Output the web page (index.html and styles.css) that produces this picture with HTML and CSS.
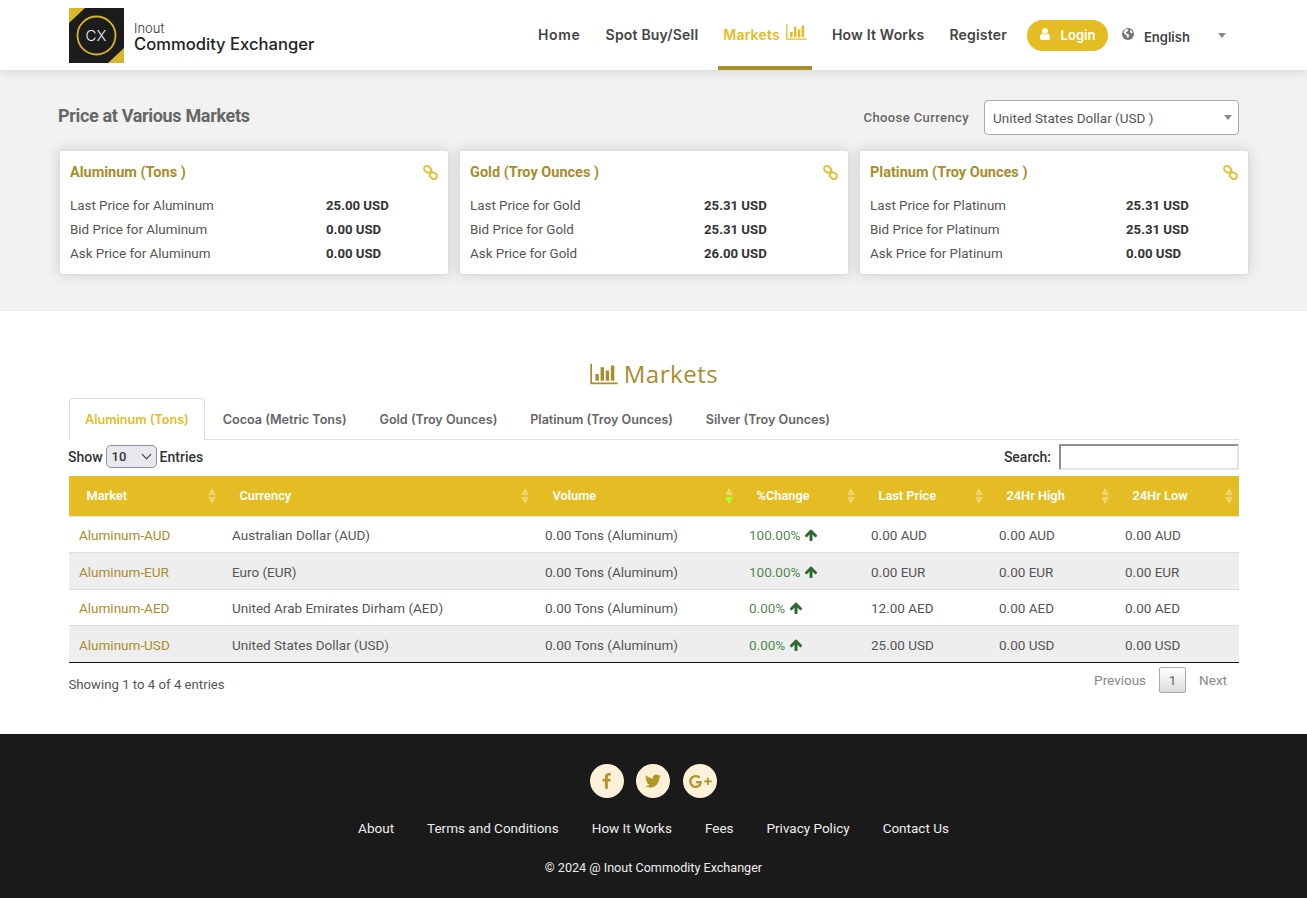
FILE: index.html
```html
<!DOCTYPE html>
<html lang="en">
<head>
<meta charset="utf-8">
<title>Inout Commodity Exchanger</title>
<link rel="stylesheet" href="styles.css">
</head>
<body>
<svg class="defs" width="0" height="0" aria-hidden="true">
  <symbol id="i-bars" viewBox="0 0 2048 1792"><path d="M640 896v512h-256v-512h256zm384-512v1024h-256v-1024h256zm1024 1152v128h-2048v-1536h128v1408h1920zm-640-896v768h-256v-768h256zm384-384v1152h-256v-1152h256z"/></symbol>
  <symbol id="i-up" viewBox="0 0 1792 1792"><path d="M1675 971q0 51-37 90l-75 75q-38 38-91 38-54 0-90-38l-294-293v704q0 52-37.5 84.5t-90.5 32.5h-128q-53 0-90.5-32.5t-37.5-84.5v-704l-294 293q-36 38-90 38t-90-38l-75-75q-38-38-38-90 0-53 38-91l651-651q35-37 90-37 54 0 91 37l651 651q37 39 37 91z"/></symbol>
  <symbol id="i-link" viewBox="0 0 16 16"><g fill="none" stroke="currentColor" stroke-width="1.9"><rect x="1" y="1.6" width="8" height="6" rx="3" transform="rotate(38 5 4.6)"/><rect x="7" y="8.4" width="8" height="6" rx="3" transform="rotate(38 11 11.4)"/></g></symbol>
</svg>

<header class="topbar">
  <a class="logo" href="#">
    <svg class="logo-mark" viewBox="0 0 55 55" aria-hidden="true">
      <rect width="55" height="55" fill="#1c1c1c"/>
      <path d="M0 0h16L0 15z" fill="#d9b52a"/>
      <path d="M55 55H39L55 40z" fill="#d9b52a"/>
      <circle cx="27.5" cy="27.5" r="19" fill="none" stroke="#d9b52a" stroke-width="1.8"/>
    </svg>
    <span class="logo-cx">CX</span>
    <span class="logo-text"><span class="logo-small">Inout</span><span class="logo-big">Commodity Exchanger</span></span>
  </a>
  <nav class="nav">
    <a class="nav-item nav-home" href="#">Home</a>
    <a class="nav-item" href="#">Spot Buy/Sell</a>
    <a class="nav-item active" href="#">Markets <svg class="nav-bars"><use href="#i-bars"/></svg></a>
    <a class="nav-item" href="#">How It Works</a>
    <a class="nav-item" href="#">Register</a>
    <a class="login" href="#"><svg class="login-icon" viewBox="0 0 1792 1792"><path d="M1536 1399q0 109-62.5 187t-150.5 78h-854q-88 0-150.5-78t-62.5-187q0-85 8.5-160.5t31.5-152 58.5-131 94-89 134.5-34.5q131 128 313 128t313-128q76 0 134.5 34.5t94 89 58.5 131 31.5 152 8.5 160.5zm-256-887q0 159-112.5 271.5t-271.5 112.5-271.5-112.5-112.5-271.5 112.5-271.5 271.5-112.5 271.5 112.5 112.5 271.5z"/></svg>Login</a>
    <div class="lang">
      <svg class="globe" viewBox="0 0 12 12"><circle cx="6" cy="6" r="6"/><path d="M3 1.6l2.4-.6 1 1-1 1.4-1.6.6.4 1.4 2 .6 1 1.4-.8 2.2-1.2-.2-.6-2.2-1.8-1-1.2-2zM8 2l2 1 .6 2-1.4.2L8 4z" fill="#fff"/></svg>
      <span class="lang-name">English</span>
      <span class="caret"></span>
    </div>
  </nav>
</header>

<section class="prices">
  <div class="prices-head">
    <h2 class="prices-title">Price at Various Markets</h2>
    <div class="currency">
      <label class="currency-label">Choose Currency</label>
      <div class="currency-box">United States Dollar (USD )<span class="currency-caret"></span></div>
    </div>
  </div>
  <div class="cards">
    <article class="card wide">
      <div class="card-head"><h3 class="card-title">Aluminum (Tons )</h3><svg class="card-link"><use href="#i-link"/></svg></div>
      <div class="card-row"><span>Last Price for Aluminum</span><b>25.00 USD</b></div>
      <div class="card-row"><span>Bid Price for Aluminum</span><b>0.00 USD</b></div>
      <div class="card-row"><span>Ask Price for Aluminum</span><b>0.00 USD</b></div>
    </article>
    <article class="card narrow">
      <div class="card-head"><h3 class="card-title">Gold (Troy Ounces )</h3><svg class="card-link"><use href="#i-link"/></svg></div>
      <div class="card-row"><span>Last Price for Gold</span><b>25.31 USD</b></div>
      <div class="card-row"><span>Bid Price for Gold</span><b>25.31 USD</b></div>
      <div class="card-row"><span>Ask Price for Gold</span><b>26.00 USD</b></div>
    </article>
    <article class="card wide">
      <div class="card-head"><h3 class="card-title">Platinum (Troy Ounces )</h3><svg class="card-link"><use href="#i-link"/></svg></div>
      <div class="card-row"><span>Last Price for Platinum</span><b>25.31 USD</b></div>
      <div class="card-row"><span>Bid Price for Platinum</span><b>25.31 USD</b></div>
      <div class="card-row"><span>Ask Price for Platinum</span><b>0.00 USD</b></div>
    </article>
  </div>
</section>

<main class="markets">
  <h1 class="markets-title"><svg class="title-bars"><use href="#i-bars"/></svg> Markets</h1>
  <ul class="tabs">
    <li class="tab active">Aluminum (Tons)</li>
    <li class="tab">Cocoa (Metric Tons)</li>
    <li class="tab">Gold (Troy Ounces)</li>
    <li class="tab">Platinum (Troy Ounces)</li>
    <li class="tab">Silver (Troy Ounces)</li>
  </ul>
  <div class="tools">
    <label class="tool-label">Show <span class="entries-wrap"><select class="entries"><option>10</option></select></span> Entries</label>
    <label class="tool-label">Search: <input class="search" type="text"></label>
  </div>
  <table class="grid">
    <colgroup>
      <col class="c1"><col class="c2"><col class="c3"><col class="c4"><col class="c5"><col class="c6"><col class="c7">
    </colgroup>
    <thead>
      <tr>
        <th>Market<span class="sort"></span></th>
        <th>Currency<span class="sort"></span></th>
        <th>Volume<span class="sort sorted"></span></th>
        <th>%Change<span class="sort"></span></th>
        <th>Last Price<span class="sort"></span></th>
        <th>24Hr High<span class="sort"></span></th>
        <th>24Hr Low<span class="sort"></span></th>
      </tr>
    </thead>
    <tbody>
      <tr><td><a href="#">Aluminum-AUD</a></td><td>Australian Dollar (AUD)</td><td>0.00 Tons (Aluminum)</td><td class="chg">100.00% <svg class="up"><use href="#i-up"/></svg></td><td>0.00 AUD</td><td>0.00 AUD</td><td>0.00 AUD</td></tr>
      <tr><td><a href="#">Aluminum-EUR</a></td><td>Euro (EUR)</td><td>0.00 Tons (Aluminum)</td><td class="chg">100.00% <svg class="up"><use href="#i-up"/></svg></td><td>0.00 EUR</td><td>0.00 EUR</td><td>0.00 EUR</td></tr>
      <tr><td><a href="#">Aluminum-AED</a></td><td>United Arab Emirates Dirham (AED)</td><td>0.00 Tons (Aluminum)</td><td class="chg">0.00% <svg class="up"><use href="#i-up"/></svg></td><td>12.00 AED</td><td>0.00 AED</td><td>0.00 AED</td></tr>
      <tr><td><a href="#">Aluminum-USD</a></td><td>United States Dollar (USD)</td><td>0.00 Tons (Aluminum)</td><td class="chg">0.00% <svg class="up"><use href="#i-up"/></svg></td><td>25.00 USD</td><td>0.00 USD</td><td>0.00 USD</td></tr>
    </tbody>
  </table>
  <div class="table-foot">
    <div class="info">Showing 1 to 4 of 4 entries</div>
    <div class="pager"><span class="page-link">Previous</span><span class="page-current">1</span><span class="page-link">Next</span></div>
  </div>
</main>

<footer class="footer">
  <div class="social">
    <a class="social-btn fb" href="#" aria-label="Facebook"><svg viewBox="0 0 1792 1792"><path d="M1343 12v264h-157q-86 0-116 36t-30 108v189h293l-39 296h-254v759h-306v-759h-255v-296h255v-218q0-186 104-288.5t277-102.5q147 0 228 12z"/></svg></a>
    <a class="social-btn" href="#" aria-label="Twitter"><svg viewBox="0 0 1792 1792"><path d="M1684 408q-67 98-162 167 1 14 1 42 0 130-38 259.5t-115.5 248.5-184.5 210.5-258 146-323 54.5q-271 0-496-145 35 4 76 4 225 0 401-138-105-2-188-64.5t-114-159.5q33 5 61 5 43 0 85-11-112-23-185.5-111.5t-73.5-205.5v-4q68 38 146 41-66-44-105-115t-39-154q0-88 44-163 121 149 294.5 238.5t371.5 99.5q-8-38-8-74 0-134 94.5-228.5t228.5-94.5q140 0 236 102 109-21 205-78-37 115-142 178 91-10 186-51z"/></svg></a>
    <a class="social-btn gplus" href="#" aria-label="Google Plus"><svg viewBox="0 0 26 16"><path d="M14.2 3.2A6.6 6.6 0 0 0 9 1a7 7 0 1 0 0 14c3.8 0 6.4-2.6 6.4-6.4V7.4H9v2.5h3.7c-.4 1.6-1.8 2.6-3.7 2.6a4.5 4.5 0 1 1 0-9c1.2 0 2.2.4 3 1.2z"/><path d="M18 6.9h2.9V4h2v2.900H26v2h-3.100v2.900h-2V8.900H18z"/></svg></a>
  </div>
  <div class="foot-links">
    <a href="#">About</a><a href="#">Terms and Conditions</a><a href="#">How It Works</a><a href="#">Fees</a><a href="#">Privacy Policy</a><a href="#">Contact Us</a>
  </div>
  <div class="copyright">© 2024 @ Inout Commodity Exchanger</div>
</footer>
</body>
</html>
```

FILE: styles.css
```css
* { box-sizing: border-box; }
html, body { margin: 0; padding: 0; }
body { font-family: "Roboto", "Liberation Sans", sans-serif; font-size: 14px; color: #444; background: #fff; }
a { text-decoration: none; color: inherit; }
.defs { display: block; height: 0; }

.topbar { position: relative; z-index: 1; height: 70px; background: #fff; display: flex; align-items: stretch; padding: 0 81px 0 69px; box-shadow: 0 2px 10px rgba(0,0,0,.12); }
.logo { display: flex; align-items: center; position: relative; height: 55px; margin-top: 8px; color: #222; }
.logo-mark { width: 55px; height: 55px; display: block; }
.logo-cx { position: absolute; left: 0; width: 54px; top: 0; text-align: center; color: #eee; font: 300 15px/55px "Inter", sans-serif; }
.logo-text { display: flex; flex-direction: column; margin-left: 10px; padding-top: 3px; }
.logo-small { font: 300 13px/14px "Inter", sans-serif; color: #333; }
.logo-big { font: 500 16.6px/18px "Inter", sans-serif; color: #222; }
.nav { display: flex; align-items: stretch; margin-left: auto; font: 600 14px/1 "Inter", sans-serif; color: #444; }
.nav-item { display: flex; align-items: center; padding: 4px 5px 0; margin-right: 15px; border-bottom: 4px solid transparent; letter-spacing: .2px; }
.nav-home { letter-spacing: .7px; }
.nav-item.active { color: #e4bd25; border-bottom-color: #a88d2c; }
.nav-bars { width: 21px; height: 18px; fill: #e4bd25; margin: -6px 0 0 6px; }
.login { align-self: center; margin: 0 14px 0 0; width: 81px; height: 31px; border-radius: 16px; background: #e4bd25; color: #fff; display: flex; align-items: center; justify-content: center; font-size: 13px; }
.login-icon { width: 14px; height: 14px; fill: #fff; margin: -3px 9px 0 -2px; }
.lang { width: 104px; align-self: center; display: flex; align-items: center; position: relative; }
.globe { width: 12px; height: 12px; fill: #777; margin-top: -2px; }
.lang-name { margin-left: 10px; font-size: 13px; color: #444; font-weight: 600; padding-top: 4px; }
.caret { position: absolute; left: 96px; top: 6px; border: 4px solid transparent; border-top: 5px solid #888; border-bottom: 0; }

.prices { background: #f2f2f2; height: 241px; border-bottom: 1px solid #eee; padding: 30px 58px 0 59px; }
.prices-head { display: flex; align-items: center; justify-content: space-between; height: 35px; padding-right: 10px; }
.prices-title { margin: 0 0 0 -1px; padding-bottom: 4px; font-size: 18px; font-weight: 700; color: #666; letter-spacing: -.33px; }
.currency { display: flex; align-items: center; }
.currency-label { font-size: 13px; font-weight: 500; color: #666; margin-right: 15px; letter-spacing: .4px; }
.currency-box { width: 255px; height: 35px; background: #fff; border: 1px solid #aaa; border-radius: 4px; padding: 0 8px; line-height: 34px; font-size: 13.5px; color: #555; position: relative; }
.currency-caret { position: absolute; right: 6px; top: 14px; border: 4px solid transparent; border-top: 5px solid #888; border-bottom: 0; }
.cards { display: grid; grid-template-columns: repeat(3, 390px); gap: 10px; margin-top: 15px; }
.card { height: 125px; background: #fff; border: 1px solid #ddd; border-radius: 3px; padding: 9px 10px; box-shadow: 0 0 14px rgba(0,0,0,.14); }
.card-head { display: flex; justify-content: space-between; align-items: center; height: 24px; margin-bottom: 9px; }
.card-title { margin: 0; font-size: 14.5px; font-weight: 700; color: #a88d2c; }
.card-link { width: 15px; height: 15px; color: #e4bd25; margin-right: 0; }
.card-row { display: grid; height: 24px; align-items: center; font-size: 13.4px; color: #555; }
.card-row b { font-size: 13.2px; font-weight: 700; color: #333; }
.wide .card-row { grid-template-columns: 256px 1fr; }
.narrow .card-row { grid-template-columns: 234px 1fr; }

.markets { padding: 43px 68px 0 69px; height: 423px; }
.markets-title { margin: 0; height: 44px; padding-bottom: 4px; font: 400 24px/40px "Open Sans", sans-serif; letter-spacing: .55px; color: #a88d2c; display: flex; justify-content: center; align-items: center; }
.title-bars { width: 28px; height: 24px; fill: #a88d2c; margin-right: 6px; }
.tabs { list-style: none; margin: 0; padding: 0; display: flex; height: 42px; border-bottom: 1px solid #ddd; font: 600 12.6px/42px "Inter", sans-serif; color: #666; }
.tab { padding: 0 15.4px; height: 42px; border: 1px solid transparent; border-bottom: 0; }
.tab.active { color: #e4bd25; background: #fff; border-color: #ddd; border-radius: 4px 4px 0 0; padding: 0 15px; height: 42px; margin-right: 1.6px; }
.tools { display: flex; justify-content: space-between; align-items: flex-start; height: 31px; padding-top: 5px; margin-left: -1px; }
.tool-label { font-size: 14px; font-weight: 500; color: #333; display: flex; align-items: center; gap: 3px; height: 24px; }
.entries-wrap { position: relative; width: 51px; height: 23px; margin-top: -1px; }
.entries-wrap::after { content: ""; position: absolute; left: 37px; top: 6px; width: 6px; height: 6px; border: solid #333; border-width: 0 1.4px 1.4px 0; transform: rotate(45deg); pointer-events: none; }
.entries { appearance: none; display: block; width: 51px; height: 23px; padding: 0 0 0 5px; font: 500 13px "Roboto", sans-serif; color: #333; background: #e9e9ed; border: 1px solid #8f8f9d; border-radius: 5px; margin: 0; }
.search { width: 180px; height: 26px; margin: 0 0 0 5px; border: 2px solid; border-color: #8f8f8f #e4e4e4 #e4e4e4 #8f8f8f; background: #fff; }
.grid { width: 1170px; table-layout: fixed; border-collapse: collapse; margin-top: 5px; font-size: 13.5px; }
.c1 { width: 153px; } .c2 { width: 313px; } .c3 { width: 204px; } .c4 { width: 122px; } .c5 { width: 128px; } .c6 { width: 126px; } .c7 { width: 124px; }
.grid th { height: 40px; background: #e4bd25; color: #fff; font-size: 12.8px; font-weight: 600; text-align: left; padding: 0 17px 0 17.5px; position: relative; border-bottom: 1px solid #e4e4e4; }
.sort { position: absolute; right: 5px; top: 12px; width: 9px; height: 16px; }
.sort::before, .sort::after { content: ""; position: absolute; left: 0; border-left: 4.5px solid transparent; border-right: 4.5px solid transparent; }
.sort::before { top: 0; border-bottom: 7px solid rgba(255,255,255,.35); }
.sort::after { bottom: 0; border-top: 7px solid rgba(255,255,255,.35); }
.sort.sorted::after { border-top-color: #adff2f; }
.grid td { height: 36.5px; padding: 2px 10px 0; border-bottom: 1px solid #ddd; color: #555; }
.grid tbody tr:nth-child(even) td { background: #eee; }
.grid tbody tr:last-child td { border-bottom: 1px solid #111; }
.grid td a { color: #a88d2c; }
.grid td.chg { color: #4f8a4f; }
.up { width: 14px; height: 14px; fill: #2b6b2f; vertical-align: -2px; }
.table-foot { display: flex; justify-content: space-between; align-items: flex-start; }
.info { padding-top: 14px; font-size: 13.2px; color: #555; margin-left: -.5px; }
.pager { display: flex; align-items: center; padding: 4px 12px 0 0; font-size: 13.5px; color: #888; }
.page-current { width: 27px; height: 26px; margin: 0 13px; border: 1px solid #aaa; border-radius: 2px; background: linear-gradient(#fff, #ddd); text-align: center; line-height: 24px; color: #666; }

.footer { background: #1a1a1a; height: 164px; padding: 30px 1px 0 0; color: #eee; text-align: center; }
.social { display: flex; justify-content: center; gap: 12.5px; }
.social-btn { width: 34px; height: 34px; border-radius: 50%; background: #fdf1d9; display: flex; align-items: center; justify-content: center; }
.social-btn svg { width: 18px; height: 18px; fill: #b29428; }
.social-btn.fb svg { width: 17px; height: 17px; }
.social-btn.gplus svg { width: 25px; height: 15px; }
.foot-links { display: flex; justify-content: center; gap: 33px; margin: 21px 0 0 1px; font-size: 13.5px; line-height: 18px; }
.copyright { margin: 22px 0 0 1px; font-size: 12.6px; line-height: 18px; }
```
